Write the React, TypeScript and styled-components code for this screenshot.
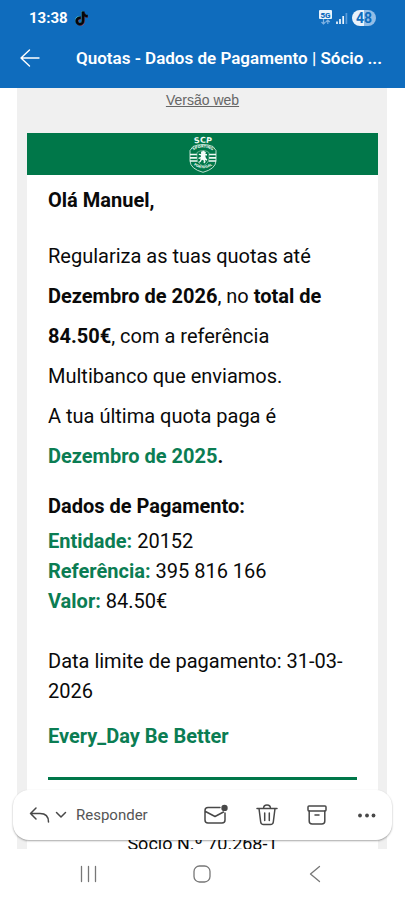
import React from "react";
import styled, { createGlobalStyle } from "styled-components";

const blue = "#0f6cbd";
const green = "#007749";
const greenText = "#0b7d53";

const GlobalStyle = createGlobalStyle`
  *, *::before, *::after { box-sizing: border-box; }
  body { margin: 0; background: #fff; }
  body, button { font-family: Roboto, "Liberation Sans", sans-serif; }
  svg { display: block; flex: none; }
`;

const Screen = styled.div`
  display: flex;
  flex-direction: column;
  height: 100vh;
  overflow: hidden;
`;

const Top = styled.header`
  flex: none;
  background: ${blue};
  color: #fff;
`;

const StatusBar = styled.div`
  display: flex;
  align-items: center;
  justify-content: space-between;
  height: 36px;
  padding: 0 29px;
`;

const StatusGroup = styled.div<{ $gap: number }>`
  display: flex;
  align-items: center;
  gap: ${(p) => p.$gap}px;
`;

const Clock = styled.time`
  font-size: 15px;
  line-height: 16px;
  font-weight: 700;
`;

const Battery = styled.span`
  display: grid;
  place-items: center;
  width: 24px;
  height: 16px;
  border-radius: 8px;
  background: linear-gradient(90deg, #e9f2fb 48%, #93bde6 48%);
  color: ${blue};
  font-size: 14px;
  line-height: 16px;
  font-weight: 700;
`;

const TitleBar = styled.div`
  display: flex;
  align-items: center;
  gap: 36px;
  height: 52px;
  padding: 0 28px 8px 20px;
`;

const IconButton = styled.button`
  display: flex;
  align-items: center;
  padding: 0;
  border: 0;
  background: none;
  color: inherit;
  cursor: pointer;
`;

const Title = styled.h1`
  flex: 1;
  min-width: 0;
  margin: 0;
  font-size: 17px;
  line-height: 24px;
  font-weight: 600;
  white-space: nowrap;
`;

const Viewport = styled.main`
  position: relative;
  flex: 1;
  min-height: 0;
  overflow: hidden;
`;

const Mail = styled.div`
  margin: 0 18px 0 17px;
  padding: 0 9px 0 10px;
  background: #f0f0f0;
`;

const WebVersion = styled.p`
  margin: 0;
  padding: 4px 0 25px;
  text-align: center;
  font-family: "Liberation Sans", Arial, sans-serif;
  font-size: 14px;
  line-height: 16px;
  & a { color: #666; }
`;

const Card = styled.article`
  background: #fff;
  color: #0a0a0a;
  font-size: 20px;
  line-height: 30px;
`;

const Banner = styled.div`
  display: flex;
  justify-content: center;
  align-items: center;
  height: 42px;
  background: ${green};
`;

const Body = styled.div`
  padding: 10px 21px 40px;
`;

const Text = styled.p<{ $top?: number; $leading?: number }>`
  margin: ${(p) => p.$top ?? 0}px 0 0;
  line-height: ${(p) => p.$leading ?? 30}px;
`;

const Green = styled.strong`
  color: ${greenText};
`;

const Rule = styled.hr`
  height: 3px;
  margin: 26px 0 0;
  border: 0;
  background: ${green};
`;

const Member = styled.p`
  margin: 49px 0 0;
  text-align: center;
  font-size: 18px;
  line-height: 30px;
`;

const ReplyBar = styled.div`
  position: absolute;
  left: 13px;
  right: 13px;
  bottom: 9px;
  display: flex;
  align-items: center;
  justify-content: space-between;
  height: 50px;
  padding: 0 16px;
  border-radius: 16px;
  background: #fff;
  color: #484848;
  box-shadow: 0 1px 2px rgba(0, 0, 0, 0.35);
`;

const ReplyGroup = styled.div`
  display: flex;
  align-items: center;
  gap: 5px;
`;

const ReplyButton = styled(IconButton)`
  margin-left: 4px;
  color: #555;
  font-size: 15px;
  line-height: 20px;
`;

const ActionGroup = styled.div`
  display: flex;
  align-items: center;
  gap: 28px;
`;

const NavBar = styled.nav`
  display: flex;
  flex: none;
  align-items: center;
  justify-content: space-between;
  height: 51px;
  padding: 0 84px 2px 80px;
  background: #fff;
  color: #777;
`;

const stroke = {
  fill: "none",
  stroke: "currentColor",
  strokeLinecap: "round" as const,
  strokeLinejoin: "round" as const,
};

const notePath =
  "M448 209.900a210.100 210.100 0 0 1-122.800-39.300v178.800A162.600 162.600 0 1 1 185 188.300v89.900a74.600 74.600 0 1 0 52.200 71.200V0h88a121.200 121.200 0 0 0 1.900 22.200 122.200 122.200 0 0 0 53.900 80.200 121.400 121.400 0 0 0 67 20.100z";

const TikTok = () => (
  <svg width="13" height="15" viewBox="-20 -20 488 552" role="img" aria-label="TikTok">
    <path d={notePath} fill="#4fd0dc" transform="translate(-20 -20)" />
    <path d={notePath} fill="#a8506f" transform="translate(20 20)" />
    <path d={notePath} fill="#05070b" stroke="#05070b" strokeWidth="22" />
  </svg>
);

const Network = () => (
  <svg width="13" height="16" viewBox="0 0 13 16" role="img" aria-label="5G">
    <rect x="0" y="0" width="13" height="9" rx="1" fill="#eaf3fb" />
    <text x="6.5" y="7.5" textAnchor="middle" fontFamily="Roboto, sans-serif" fontSize="8" fontWeight="900" fill={blue}>5G</text>
    <path d="M4.500 9v5M2.500 12l2 2 2-2" fill="none" stroke="#7fb2e2" strokeWidth="1.200" />
    <path d="M8.800 14v-4M6.800 12l2-2 2 2" fill="none" stroke="#7fb2e2" strokeWidth="1.200" />
  </svg>
);

const Signal = () => (
  <svg width="12" height="12" viewBox="0 0 12 12" role="img" aria-label="Sinal">
    <path d="M1 9.500V12M4 7v5M7.200 4v8" stroke="#eef6fd" strokeWidth="1.700" />
    <path d="M10.400 1v11" stroke="#5a9bd8" strokeWidth="1.700" />
  </svg>
);

const Crest = () => (
  <svg width="28" height="38" viewBox="0 0 28 38" role="img" aria-label="Sporting Clube de Portugal">
    <defs>
      <path id="arcScp" d="M1 9.500Q14 6 27 9.500" />
      <path id="arcTop" d="M3 16.500Q14 8.500 25 16.500" />
      <path id="arcBottom" d="M3.500 29Q14 37.500 24.500 29" />
    </defs>
    <g fill="#f0faf5" fontFamily="'DejaVu Sans', sans-serif" fontWeight="700" textAnchor="middle">
      <text fontSize="8"><textPath href="#arcScp" startOffset="50%">SCP</textPath></text>
      <text fontSize="3.600"><textPath href="#arcTop" startOffset="50%">SPORTING</textPath></text>
      <text fontSize="3.300"><textPath href="#arcBottom" startOffset="50%">PORTUGAL</textPath></text>
    </g>
    <path d="M4 11.500Q14 7.500 24 11.500L27 15.500V26Q26.500 34 14 37.300Q1.500 34 1 26V15.500Z" fill="none" stroke="#d3eadf" strokeWidth=".9" />
    <path d="M1 19.500h7M1 22.800h7M1 26h7.500M20 19.500H27M20 22.800H27M19.500 26h7.500" stroke="#f0faf5" strokeWidth="1.700" />
    <path d="M8 17.500Q14 13.500 20 17.500V23.500Q19.500 28.500 14 31Q8.500 28.500 8 23.500Z" fill={green} stroke="#a9d5c0" strokeWidth=".6" />
    <path transform="translate(0 .6)" d="M12 16.200l2.600-1 2.300 1.500-.5 1.600 1.600.2v1.300l-1.800.2.700 2.400 1.500 1.700-.8 1-1.600-.9.600 2.300-1.400 1.300-.7-.8.400-1.800-1.900-1.100-1.300 2.400-1.700.7-.3-.9 1.200-1 .8-2.500-2 .5-.3-1.200 2.400-.7.200-1.600-2.300-.6.200-1.100 2.200.2z" fill="#f4fbf8" />
  </svg>
);

export default function App() {
  return (
    <>
      <GlobalStyle />
      <Screen>
        <Top>
          <StatusBar>
            <StatusGroup $gap={7}>
              <Clock>13:38</Clock>
              <TikTok />
            </StatusGroup>
            <StatusGroup $gap={4}>
              <Network />
              <Signal />
              <Battery>48</Battery>
            </StatusGroup>
          </StatusBar>
          <TitleBar>
            <IconButton aria-label="Voltar">
              <svg width="20" height="20" viewBox="0 0 20 20" {...stroke} strokeWidth="1.400">
                <path d="M19 10H1M9.500 2L1 10l8.500 8" />
              </svg>
            </IconButton>
            <Title>Quotas - Dados de Pagamento | Sócio ...</Title>
          </TitleBar>
        </Top>

        <Viewport>
          <Mail>
            <WebVersion><a href="#web">Versão web</a></WebVersion>
            <Card>
              <Banner><Crest /></Banner>
              <Body>
                <Text><strong>Olá Manuel,</strong></Text>
                <Text $top={21} $leading={40}>
                  Regulariza as tuas quotas até <strong>Dezembro de 2026</strong>, no{" "}
                  <strong>total de 84.50€</strong>, com a referência Multibanco que enviamos.
                  <br />
                  A tua última quota paga é <Green>Dezembro de 2025</Green><strong>.</strong>
                </Text>
                <Text $top={15}><strong>Dados de Pagamento:</strong></Text>
                <Text $top={5}><Green>Entidade:</Green> 20152</Text>
                <Text><Green>Referência:</Green> 395 816 166</Text>
                <Text><Green>Valor:</Green> 84.50€</Text>
                <Text $top={30}>Data limite de pagamento: 31-03-<wbr />2026</Text>
                <Text $top={15}><Green>Every_Day Be Better</Green></Text>
                <Rule />
                <Member>Sócio N.º 70.268-1</Member>
              </Body>
            </Card>
          </Mail>

          <ReplyBar>
            <ReplyGroup>
              <IconButton aria-label="Responder à mensagem">
                <svg width="21" height="18" viewBox="0 0 21 18" {...stroke} strokeWidth="1.500">
                  <path d="M7 2L1.500 7.500L7 13M1.500 7.500H11Q19.500 7.500 19.500 16" />
                </svg>
              </IconButton>
              <IconButton aria-label="Mais opções de resposta">
                <svg width="12" height="8" viewBox="0 0 12 8" {...stroke} strokeWidth="1.500">
                  <path d="M1.500 1.500L6 6l4.500-4.500" />
                </svg>
              </IconButton>
              <ReplyButton>Responder</ReplyButton>
            </ReplyGroup>
            <ActionGroup>
              <IconButton aria-label="Marcar como não lida">
                <svg width="24" height="22" viewBox="0 0 24 22" {...stroke} strokeWidth="1.500">
                  <path d="M16 3.500H4Q1 3.500 1 6.500V16Q1 19 4 19H18Q21 19 21 16V9M1.500 7.500L11 12.500L19.500 8" />
                  <circle cx="20.500" cy="3.900" r="3.200" fill="currentColor" stroke="none" />
                </svg>
              </IconButton>
              <IconButton aria-label="Eliminar">
                <svg width="22" height="22" viewBox="0 0 22 22" {...stroke} strokeWidth="1.500">
                  <path d="M1 4.500H21M7.500 4.500Q7.500 1 11 1T14.500 4.500M3 4.500L4.700 18Q5 20.500 7.500 20.500H14.500Q17 20.500 17.300 18L19 4.500M8.700 9v7.500M13.300 9v7.500" />
                </svg>
              </IconButton>
              <IconButton aria-label="Arquivar">
                <svg width="22" height="22" viewBox="0 0 22 22" {...stroke} strokeWidth="1.500">
                  <rect x="2" y="2" width="18" height="5" rx="1" />
                  <path d="M3.200 7V17Q3.200 20 6.200 20H15.800Q18.800 20 18.800 17V7M9 11h4" />
                </svg>
              </IconButton>
              <IconButton aria-label="Mais">
                <svg width="20" height="6" viewBox="0 0 20 6" fill="currentColor">
                  <circle cx="4" cy="3.500" r="1.900" />
                  <circle cx="11" cy="3.500" r="1.900" />
                  <circle cx="17.500" cy="3.500" r="1.900" />
                </svg>
              </IconButton>
            </ActionGroup>
          </ReplyBar>
        </Viewport>

        <NavBar>
          <IconButton aria-label="Recentes">
            <svg width="17" height="18" viewBox="0 0 17 18" {...stroke} strokeWidth="1.300">
              <path d="M1.500 1.500v15M8.500 1.500v15M15.500 1.500v15" />
            </svg>
          </IconButton>
          <IconButton aria-label="Início">
            <svg width="20" height="18" viewBox="0 0 20 18" {...stroke} strokeWidth="1.300">
              <rect x="1" y="1" width="16" height="16" rx="5.500" />
            </svg>
          </IconButton>
          <IconButton aria-label="Retroceder">
            <svg width="12" height="18" viewBox="0 0 12 18" {...stroke} strokeWidth="1.300">
              <path d="M10.500 1.500L1.500 9l9 7.500" />
            </svg>
          </IconButton>
        </NavBar>
      </Screen>
    </>
  );
}
